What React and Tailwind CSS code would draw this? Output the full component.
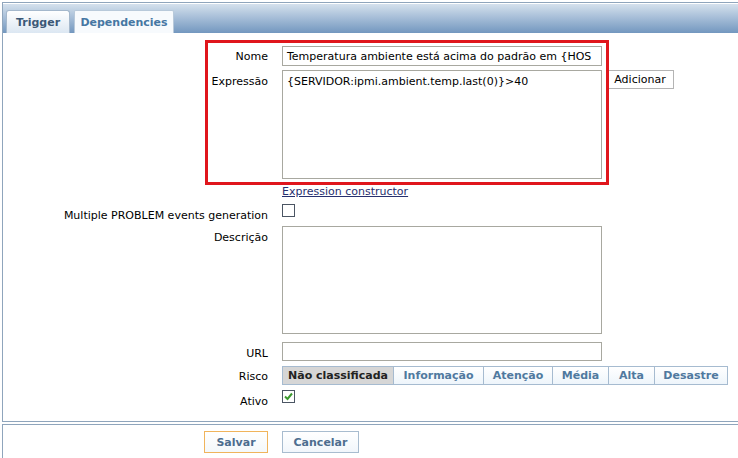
// App.jsx

const riscos = [
  { name: "Não classificada", w: "w-[112px]", active: true },
  { name: "Informação", w: "w-[91px]" },
  { name: "Atenção", w: "w-[70px]" },
  { name: "Média", w: "w-[57px]" },
  { name: "Alta", w: "w-[47px]" },
  { name: "Desastre", w: "w-[74px]" },
];

function Label({ children, className = "" }) {
  return (
    <div className={`w-[279px] shrink-0 pr-[14px] text-right text-black ${className}`}>{children}</div>
  );
}

function CheckBox({ checked }) {
  return (
    <div className="w-[13px] h-[13px] border border-[#4b5563] bg-white flex items-center justify-center">
      {checked && (
        <svg width="9" height="9" viewBox="0 0 9 9">
          <path d="M1 4.5 L3.5 7 L8 1.5" stroke="#3c9a2e" strokeWidth="2" fill="none" />
        </svg>
      )}
    </div>
  );
}

export default function App() {
  return (
    <div
      className="w-[738px] h-[458px] bg-white relative overflow-hidden text-[11px] leading-[13px]"
      style={{ fontFamily: "'DejaVu Sans', Verdana, sans-serif" }}
    >
      {/* Top panel */}
      <div className="mt-[2px] ml-[2px] h-[420px] border-l border-t border-b border-[#8fa5bc] flex flex-col">
        {/* Header with tabs */}
        <div className="h-[30px] border-t border-white bg-gradient-to-b from-[#d5e1ed] to-[#7397bf] flex items-end pl-[3px] gap-[4px]">
          <div className="w-[64px] h-[23px] rounded-t-[3px] border border-b-0 border-[#a5b8cc] bg-gradient-to-b from-[#ffffff] to-[#dce7f2] flex items-center justify-center font-bold text-[#3b5877]">
            Trigger
          </div>
          <div className="w-[100px] h-[23px] rounded-t-[2px] border border-b-0 border-[#b8c9da] bg-[#f7fafd] flex items-center justify-center font-bold text-[#4677a3]">
            Dependencies
          </div>
        </div>

        {/* Form */}
        <div className="flex flex-col">
          <div className="flex items-center mt-[13px] h-[20px]">
            <Label className="pt-[1px]">Nome</Label>
            <div className="w-[320px] h-[20px] border border-[#a8a8a0] px-[4px] flex items-center overflow-hidden whitespace-nowrap text-black">
              Temperatura ambiente está acima do padrão em {"{"}HOS
            </div>
          </div>

          <div className="flex items-start mt-[4px]">
            <Label className="pt-[5px]">Expressão</Label>
            <div className="w-[320px] h-[109px] border border-[#a8a8a0] px-[4px] pt-[4px] text-black">
              {"{SERVIDOR:ipmi.ambient.temp.last(0)}>40"}
            </div>
            <div className="ml-[4px] w-[68px] h-[19px] border border-[#b4b4b4] bg-white flex items-center justify-center text-black">
              Adicionar
            </div>
          </div>

          <div className="flex items-center h-[19px] mt-[3px]">
            <Label />
            <span className="text-[#27306f] underline">Expression constructor</span>
          </div>

          <div className="flex items-start mt-[3px]">
            <Label className="pt-[5px]">Multiple PROBLEM events generation</Label>
            <CheckBox />
          </div>

          <div className="flex items-start mt-[4px]">
            <Label className="pt-[5px]">Descrição</Label>
            <div className="w-[320px] h-[108px] border border-[#a8a8a0]" />
          </div>

          <div className="flex items-center mt-[8px] h-[19px]">
            <Label className="pt-[3px]">URL</Label>
            <div className="w-[320px] h-[19px] border border-[#a8a8a0]" />
          </div>

          <div className="flex items-center mt-[5px] h-[19px]">
            <Label className="pt-[1px]">Risco</Label>
            <div className="flex">
              {riscos.map((r) => (
                <div
                  key={r.name}
                  className={`${r.w} h-[19px] border border-[#a6bbd0] -ml-px first:ml-0 flex items-center justify-center font-bold ${
                    r.active
                      ? "bg-[#d6d6d6] text-[#222222] border-[#9aa8b6]"
                      : "bg-gradient-to-b from-[#ffffff] to-[#eef5fb] text-[#50799f]"
                  }`}
                >
                  {r.name}
                </div>
              ))}
            </div>
          </div>

          <div className="flex items-start mt-[5px]">
            <Label className="pt-[5px]">Ativo</Label>
            <CheckBox checked />
          </div>
        </div>
      </div>

      {/* Bottom panel */}
      <div className="mt-[2px] ml-[2px] h-[40px] border-l border-t border-[#8fa5bc] flex items-start pt-[6px]">
        <div className="ml-[201px] w-[64px] h-[22px] border border-[#f0b45c] bg-gradient-to-b from-[#ffffff] to-[#f4f8fb] flex items-center justify-center font-bold text-[#4d6d8f]">
          Salvar
        </div>
        <div className="ml-[14px] w-[77px] h-[22px] border border-[#a8bccf] bg-gradient-to-b from-[#ffffff] to-[#f1f6fb] flex items-center justify-center font-bold text-[#4d6d8f]">
          Cancelar
        </div>
      </div>

      {/* Red highlight annotation */}
      <div className="absolute left-[205px] top-[40px] w-[404px] h-[145px] border-[3px] border-[#e0161c] pointer-events-none" />
    </div>
  );
}
